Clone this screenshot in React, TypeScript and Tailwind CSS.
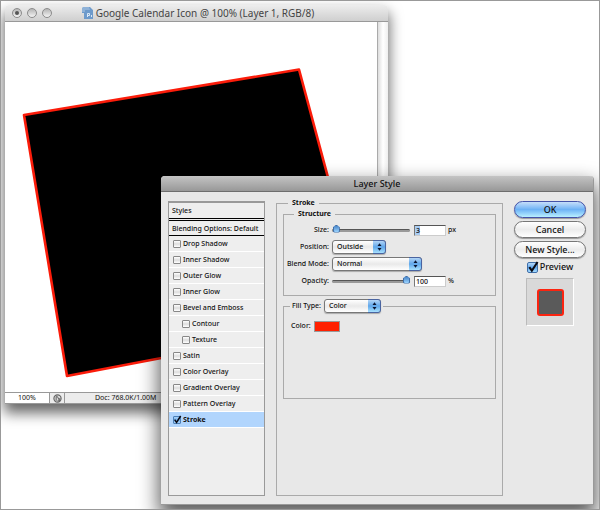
import { useState } from "react";

interface StyleItem {
  id: string;
  label: string;
  nested?: boolean;
}

const STYLE_ITEMS: StyleItem[] = [
  { id: "drop-shadow", label: "Drop Shadow" },
  { id: "inner-shadow", label: "Inner Shadow" },
  { id: "outer-glow", label: "Outer Glow" },
  { id: "inner-glow", label: "Inner Glow" },
  { id: "bevel", label: "Bevel and Emboss" },
  { id: "contour", label: "Contour", nested: true },
  { id: "texture", label: "Texture", nested: true },
  { id: "satin", label: "Satin" },
  { id: "color-overlay", label: "Color Overlay" },
  { id: "gradient-overlay", label: "Gradient Overlay" },
  { id: "pattern-overlay", label: "Pattern Overlay" },
  { id: "stroke", label: "Stroke" },
];

function CheckMark() {
  return (
    <svg
      viewBox="0 0 12 12"
      className="pointer-events-none absolute bottom-0 left-0 hidden h-full w-full overflow-visible peer-checked:block"
      aria-hidden="true"
    >
      <path d="M2.5 5.5 L5.3 9.5 L11.5 0" fill="none" stroke="#0a0a14" strokeWidth="2.3" />
    </svg>
  );
}

interface SelectProps {
  id: string;
  options: string[];
  className: string;
}

function Select({ id, options, className }: SelectProps) {
  return (
    <span className={`relative block h-[14px] ${className}`}>
      <select
        id={id}
        className="block h-full w-full appearance-none rounded-[3px] border border-[#777] bg-linear-to-b from-white via-[#e9e9e9] to-white pl-1 text-[7px] leading-[12px] shadow-[0_1px_1px_#aaa]"
      >
        {options.map((option) => (
          <option key={option}>{option}</option>
        ))}
      </select>
      <svg
        viewBox="0 0 13 14"
        className="pointer-events-none absolute top-0 right-0 h-[14px] w-[13px]"
        aria-hidden="true"
      >
        <defs>
          <linearGradient id={`${id}-aqua`} x1="0" y1="0" x2="0" y2="1">
            <stop offset="0" stopColor="#b9d8f7" />
            <stop offset="0.5" stopColor="#5fa6ea" />
            <stop offset="1" stopColor="#aee6ff" />
          </linearGradient>
        </defs>
        <path d="M0 .5H10Q12.5 .5 12.5 3V11Q12.5 13.5 10 13.5H0Z" fill={`url(#${id}-aqua)`} />
        <path d="M0 .5H10Q12.5 .5 12.5 3V11Q12.5 13.5 10 13.5H0" fill="none" stroke="#4a64a0" />
        <path d="M6.5 3.3 8.5 6H4.5ZM6.5 10.7 4.5 8H8.5Z" fill="#0b1530" />
      </svg>
    </span>
  );
}

interface SliderProps {
  id: string;
  label: string;
  max: number;
  value: number;
  onChange: (value: number) => void;
}

function Slider({ id, label, max, value, onChange }: SliderProps) {
  return (
    <input
      id={id}
      type="range"
      aria-label={label}
      min={0}
      max={max}
      value={value}
      onChange={(e) => onChange(Number(e.target.value))}
      className="h-2 w-[78px] appearance-none bg-transparent [&::-webkit-slider-runnable-track]:h-[3px] [&::-webkit-slider-runnable-track]:rounded-full [&::-webkit-slider-runnable-track]:border-t [&::-webkit-slider-runnable-track]:border-[#555] [&::-webkit-slider-runnable-track]:bg-[#999] [&::-webkit-slider-thumb]:-mt-[5px] [&::-webkit-slider-thumb]:h-2 [&::-webkit-slider-thumb]:w-[7px] [&::-webkit-slider-thumb]:appearance-none [&::-webkit-slider-thumb]:rounded-b-[2px] [&::-webkit-slider-thumb]:border [&::-webkit-slider-thumb]:border-[#3f6ea8] [&::-webkit-slider-thumb]:bg-linear-to-b [&::-webkit-slider-thumb]:from-[#4a86c8] [&::-webkit-slider-thumb]:to-[#9bd4ff] [&::-webkit-slider-thumb]:[clip-path:polygon(50%_0,100%_35%,100%_100%,0_100%,0_35%)]"
    />
  );
}

const fieldClass =
  "h-[11px] w-8 border border-[#ccc] border-t-[#555] border-l-[#777] bg-white px-px text-[7px] leading-[9px] outline-none";
const labelClass = "w-[45px] shrink-0 text-right whitespace-nowrap";
const buttonClass = "h-[17px] rounded-full border text-[9px] leading-[15px] font-medium shadow-[0_1px_1px_#999]";

function DocumentWindow() {
  return (
    <section className="absolute top-[4px] left-[4px] w-[383px] rounded-t-[4px] bg-white shadow-[0_8px_14px_1px_rgba(0,0,0,0.6)]">
      <header className="flex h-[17px] items-center rounded-t-[4px] border-b border-[#999] bg-linear-to-b from-[#ededed] to-[#cfcfcf] px-[7px]">
        <div className="flex w-[40px] justify-between">
          {["Close", "Minimize", "Zoom"].map((name) => (
            <button
              key={name}
              type="button"
              aria-label={name}
              className="flex size-[10px] items-center justify-center rounded-full border border-[#8b8b8b] bg-linear-to-b from-[#b5b5b5] to-[#f4f4f4]"
            >
              {name === "Close" && <span className="size-1 rounded-full bg-[#555]" />}
            </button>
          ))}
        </div>
        <div className="flex flex-1 items-center justify-center gap-[2px] pr-[37px]">
          <svg viewBox="0 0 12 12" className="size-[12px]" aria-hidden="true">
            <path d="M1 0H8L11 3V12H2V6H0V2Z" fill="#6d9acb" />
            <path d="M0 2 1 0H7L8 3H3V5H0Z" fill="#8fb2d8" />
            <path d="M5.5 10V6.500H7.500V8.500H5.500M9.500 8V10" fill="none" stroke="#dbe8f6" />
          </svg>
          <h1 className="text-[10px] leading-3 whitespace-nowrap text-[#444]">
            Google Calendar Icon @ 100% (Layer 1, RGB/8)
          </h1>
        </div>
      </header>
      <div className="flex">
        <svg viewBox="5 22 372 370" className="min-w-0 flex-1" role="img" aria-label="Layer 1">
          <path
            d="M24 115 L299 69.5 L366 319 L67 376 Z"
            fill="#000"
            stroke="#fb1c0a"
            strokeWidth="2.6"
            strokeLinejoin="round"
          />
        </svg>
        <div className="w-[11px] border-l border-[#aaa] bg-linear-to-r from-[#ddd] via-white to-[#eee]" />
      </div>
      <footer className="flex h-[12px] border-y border-[#999] bg-[#ececec] text-[7px] leading-[10px]">
        <input
          aria-label="Zoom level"
          defaultValue="100%"
          className="w-[45px] border-r border-[#999] bg-white text-center outline-none"
        />
        <button
          type="button"
          aria-label="Status options"
          className="flex w-[15px] items-center justify-center border-r border-[#999]"
        >
          <svg viewBox="0 0 10 10" className="size-[9px]" aria-hidden="true">
            <circle cx="5" cy="5" r="4" fill="#ddd" stroke="#666" strokeWidth="1.3" />
            <path d="M3.5 3V7.5M3.5 3H5L7 7M7.5 4.5V7.5H5" fill="none" stroke="#555" />
          </svg>
        </button>
        <span className="pl-[30px] whitespace-nowrap">Doc: 768.0K/1.00M</span>
      </footer>
    </section>
  );
}

function StylesList() {
  const [checked, setChecked] = useState<string[]>(["stroke"]);

  const toggle = (id: string) =>
    setChecked((prev) => (prev.includes(id) ? prev.filter((item) => item !== id) : [...prev, id]));

  return (
    <div className="mt-[2px] border border-t-2 border-[#999] bg-[#eee]">
      <h3 className="h-[18px] border-b-3 border-double border-black pl-[3px] leading-[15px]">Styles</h3>
      <p className="h-[15px] border-b border-black pl-[3px] leading-[15px] whitespace-nowrap">
        Blending Options: Default
      </p>
      <ul>
        {STYLE_ITEMS.map((item) => {
          const isChecked = checked.includes(item.id);
          return (
            <li
              key={item.id}
              className={`flex h-4 items-center border-b border-white ${
                isChecked ? "bg-[#b1d5fd] font-bold" : ""
              } ${item.nested ? "pl-[13px]" : "pl-1"}`}
            >
              <label className="flex items-center gap-[2px] whitespace-nowrap">
                <span className="relative block size-2">
                  <input
                    type="checkbox"
                    checked={isChecked}
                    onChange={() => toggle(item.id)}
                    className="peer block size-2 appearance-none rounded-[1px] border border-[#888] bg-linear-to-b from-white via-[#ddd] to-white checked:border-[#4b7fb8] checked:from-[#a9d2f8] checked:via-[#6fb0ee] checked:to-[#a9d2f8]"
                  />
                  <CheckMark />
                </span>
                {item.label}
              </label>
            </li>
          );
        })}
      </ul>
    </div>
  );
}

function StrokeSettings() {
  const [size, setSize] = useState(3);
  const [opacity, setOpacity] = useState(100);

  return (
    <fieldset className="min-w-0 border border-[#aaa] px-[6px]">
      <legend className="ml-[5px] h-2 px-1 leading-2 font-bold">Stroke</legend>

      <fieldset className="mt-[3px] border border-[#aaa] pt-1 pb-[6px]">
        <legend className="ml-[10px] h-2 px-1 leading-2 font-bold">Structure</legend>
        <div className="flex flex-col gap-px">
          <div className="flex h-4 items-center">
            <label htmlFor="size" className={labelClass}>
              Size:
            </label>
            <div className="ml-[3px] flex items-center">
              <Slider id="size-slider" label="Size slider" max={250} value={size} onChange={setSize} />
            </div>
            <input
              id="size"
              value={size}
              onChange={(e) => setSize(Number(e.target.value) || 0)}
              className={`ml-1 ${fieldClass} bg-linear-to-r from-[#a8ccf2] from-[5px] to-white to-[5px]`}
            />
            <span className="ml-[2px]">px</span>
          </div>
          <div className="flex h-4 items-center">
            <label htmlFor="position" className={labelClass}>
              Position:
            </label>
            <Select id="position" options={["Outside", "Inside", "Center"]} className="ml-[3px] w-[54px]" />
          </div>
          <div className="flex h-4 items-center">
            <label htmlFor="blend-mode" className={labelClass}>
              Blend Mode:
            </label>
            <Select
              id="blend-mode"
              options={["Normal", "Dissolve", "Multiply", "Screen"]}
              className="ml-[3px] w-[90px]"
            />
          </div>
          <div className="flex h-4 items-center">
            <label htmlFor="opacity" className={labelClass}>
              Opacity:
            </label>
            <div className="ml-[3px] flex items-center">
              <Slider
                id="opacity-slider"
                label="Opacity slider"
                max={100}
                value={opacity}
                onChange={setOpacity}
              />
            </div>
            <input
              id="opacity"
              value={opacity}
              onChange={(e) => setOpacity(Number(e.target.value) || 0)}
              className={`ml-1 ${fieldClass}`}
            />
            <span className="ml-[2px]">%</span>
          </div>
        </div>
      </fieldset>

      <fieldset className="mt-[3px] border border-[#aaa] px-[7px] pt-[7px] pb-[66px]">
        <legend className="-ml-px flex h-[14px] items-center gap-[3px] px-[2px]">
          <label htmlFor="fill-type">Fill Type:</label>
          <Select id="fill-type" options={["Color", "Gradient", "Pattern"]} className="w-[57px]" />
        </legend>
        <div className="flex h-3 items-center gap-[3px]">
          <label htmlFor="stroke-color">Color:</label>
          <input
            id="stroke-color"
            type="color"
            defaultValue="#ff2000"
            className="h-[11px] w-[26px] appearance-none border border-[#999] bg-[#ff2000] [&::-webkit-color-swatch]:rounded-none [&::-webkit-color-swatch]:border-0 [&::-webkit-color-swatch-wrapper]:p-0"
          />
        </div>
      </fieldset>
    </fieldset>
  );
}

function DialogActions() {
  return (
    <div className="mt-[2px] flex flex-col text-[9px]">
      <div className="flex flex-col gap-[3px]">
        <button
          type="button"
          className={`${buttonClass} border-[#4453a8] bg-linear-to-b from-[#c5defa] via-[#6db2f5] to-[#b9f0ff]`}
        >
          OK
        </button>
        <button type="button" className={`${buttonClass} border-[#777] bg-linear-to-b from-white via-[#ececec] to-white`}>
          Cancel
        </button>
        <button type="button" className={`${buttonClass} border-[#777] bg-linear-to-b from-white via-[#ececec] to-white`}>
          New Style...
        </button>
      </div>
      <label className="mt-[3px] flex items-center gap-[2px] self-center leading-3">
        <span className="relative block size-[11px]">
          <input
            type="checkbox"
            defaultChecked
            className="peer block size-[11px] appearance-none rounded-[2px] border border-[#888] bg-white checked:border-[#3f6ea8] checked:bg-linear-to-b checked:from-[#b5d8fa] checked:via-[#62a9ee] checked:to-[#a5dcff]"
          />
          <CheckMark />
        </span>
        Preview
      </label>
      <div className="mt-[5px] flex size-12 items-center justify-center self-center border border-[#bbb] border-r-white border-b-white bg-[#d9d9d9]">
        <div className="size-[27px] rounded-[3px] border-2 border-[#fb2410] bg-[#5a5a5a]" />
      </div>
    </div>
  );
}

function LayerStyleDialog() {
  return (
    <section
      role="dialog"
      aria-labelledby="dialog-title"
      className="absolute top-[175px] right-[5px] bottom-[4px] left-[160px] flex flex-col rounded-t-[4px] border-r border-b border-[#999] bg-[#e8e8e8] shadow-[0_10px_20px_2px_rgba(0,0,0,0.65)]"
    >
      <header className="flex h-4 items-center justify-center rounded-t-[4px] border-b border-[#6e6e6e] bg-linear-to-b from-[#c4c4c4] to-[#989898]">
        <h2 id="dialog-title" className="text-[9px] leading-3 font-medium">
          Layer Style
        </h2>
      </header>
      <div className="grid flex-1 grid-cols-[97px_1fr_72px] gap-[11px] px-[7px] pt-[7px] pb-2 text-[7px] leading-[10px] font-medium">
        <StylesList />
        <StrokeSettings />
        <DialogActions />
      </div>
    </section>
  );
}

export default function App() {
  return (
    <main className="relative min-h-screen overflow-hidden border border-[#999] bg-white font-['Noto_Sans','Open_Sans',sans-serif] text-[#111]">
      <DocumentWindow />
      <LayerStyleDialog />
    </main>
  );
}
